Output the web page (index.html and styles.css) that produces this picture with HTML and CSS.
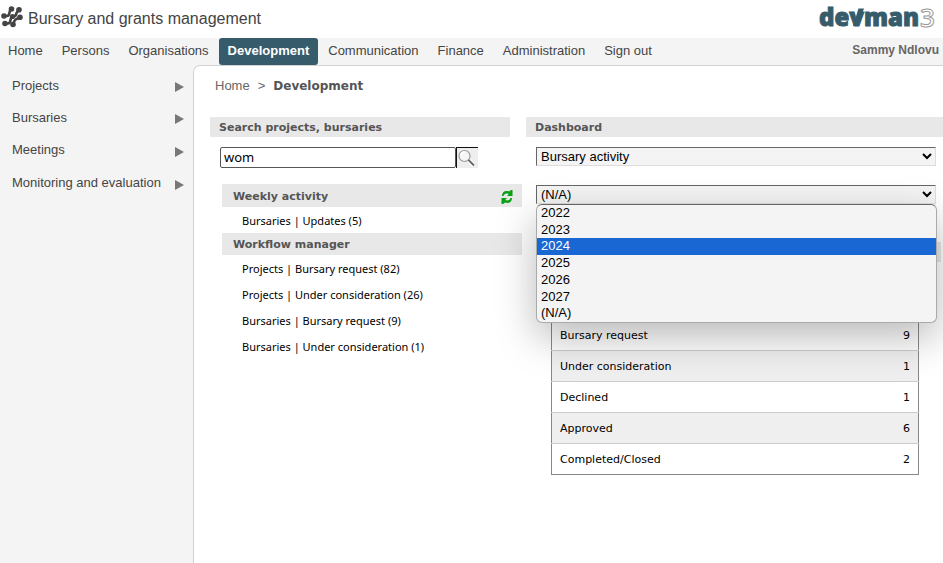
FILE: index.html
```html
<!DOCTYPE html>
<html lang="en">
<head>
<meta charset="utf-8">
<title>Bursary and grants management</title>
<link rel="stylesheet" href="styles.css">
</head>
<body>
<header class="top">
  <svg class="mark" viewBox="0 0 24 24" aria-hidden="true">
    <g fill="none" stroke="#444" stroke-width="2.6">
      <path d="M3.500 10H7q2 0 2.500-3.500L10.500 3"/>
      <path d="M5 17.500H8q2 0 2.500-3.500 .5-3.500 3-3.500 2.500 0 3-3.500L18.500 4"/>
      <path d="M13 19.500q1-5.500 3.500-6.500L20 11.500"/>
    </g>
    <g fill="#444"><circle cx="11.500" cy="3" r="2.800"/><circle cx="19" cy="3.700" r="2.800"/><circle cx="4" cy="10" r="2.800"/><circle cx="12.500" cy="10.500" r="2.600"/><circle cx="20" cy="11.200" r="2.800"/><circle cx="5" cy="17.500" r="2.800"/><circle cx="13" cy="18.500" r="2.800"/></g>
  </svg>
  <h1 class="title">Bursary and grants management</h1>
  <svg class="logo" viewBox="0 0 120 36" role="img" aria-label="devman3">
    <text class="logo-word" x="0" y="25">devman</text>
    <path class="logo-arm" d="M39.500 7.500H45L38.500 25H34z"/>
    <text class="logo-digit" x="101" y="26">3</text>
  </svg>
</header>
<nav class="nav">
  <a href="#">Home</a><a href="#">Persons</a><a href="#">Organisations</a><a href="#" class="active">Development</a><a href="#">Communication</a><a href="#">Finance</a><a href="#">Administration</a><a href="#">Sign out</a>
  <span class="user">Sammy Ndlovu</span>
</nav>
<div class="body">
  <aside class="side">
    <a href="#">Projects<span class="arrow"></span></a>
    <a href="#">Bursaries<span class="arrow"></span></a>
    <a href="#">Meetings<span class="arrow"></span></a>
    <a href="#">Monitoring and evaluation<span class="arrow"></span></a>
  </aside>
  <main class="main">
    <div class="crumbs"><a href="#">Home</a><span>&gt;</span><strong>Development</strong></div>
    <div class="columns">
      <section class="left">
        <h2 class="bar">Search projects, bursaries</h2>
        <form class="search">
          <input type="text" value="wom" aria-label="Search projects, bursaries">
          <button type="button" aria-label="Search"><svg viewBox="0 0 20 18"><path d="M12 11.500 17 17" stroke="#fff" stroke-width="4"/><circle cx="7.500" cy="7" r="5.500" fill="#f6f6f6" stroke="#999" stroke-width="1.200"/><path d="M3.500 6.500a4.200 4.200 0 0 1 4-3.500" stroke="#fff" stroke-width="1.500" fill="none"/><path d="M11.500 11 17 16.500" stroke="#666" stroke-width="1.800"/></svg></button>
        </form>
        <div class="tasks">
          <h3 class="bar">Weekly activity
            <button type="button" class="refresh" aria-label="Refresh"><svg viewBox="0 0 12 14" fill="#0a9f14"><path d="M1 6C1 2 4 0 8 1.500L10 0h1.500v6H6l1.800-2C5 3 3 4 2.500 6z"/><path d="M11 8c0 4-3 6-7 4.500L2 14H.500V8H6l-1.800 2C7 11 9 10 9.500 8z"/></svg></button></h3>
          <a href="#">Bursaries | Updates (5)</a>
          <h3 class="bar second">Workflow manager</h3>
          <a href="#">Projects | Bursary request (82)</a>
          <a href="#">Projects | Under consideration (26)</a>
          <a href="#">Bursaries | Bursary request (9)</a>
          <a href="#">Bursaries | Under consideration (1)</a>
        </div>
      </section>
      <section class="right">
        <h2 class="bar">Dashboard</h2>
        <div class="field"><select aria-label="Report"><option>Bursary activity</option></select></div>
        <div class="field picker">
          <select aria-label="Year"><option>(N/A)</option></select>
          <ul class="popup" role="listbox" aria-label="Year">
            <li role="option">2022</li><li role="option">2023</li><li role="option" aria-selected="true">2024</li><li role="option">2025</li><li role="option">2026</li><li role="option">2027</li><li role="option">(N/A)</li>
          </ul>
        </div>
        <div class="report-bar"></div>
        <table class="report">
          <tbody>
            <tr><th scope="row">Bursary request</th><td>9</td></tr>
            <tr><th scope="row">Under consideration</th><td>1</td></tr>
            <tr><th scope="row">Declined</th><td>1</td></tr>
            <tr><th scope="row">Approved</th><td>6</td></tr>
            <tr><th scope="row">Completed/Closed</th><td>2</td></tr>
          </tbody>
        </table>
      </section>
    </div>
  </main>
</div>
</body>
</html>
```
FILE: styles.css
```css
* { box-sizing: border-box; }
body {
  margin: 0;
  min-height: 100vh;
  display: flex;
  flex-direction: column;
  background: #fff;
  color: #000;
  font-family: "Liberation Sans", Arial, sans-serif;
  font-size: 13px;
}
a { color: inherit; text-decoration: none; }
h1, h2, h3 { margin: 0; }

.top { display: flex; align-items: center; height: 38px; padding-right: 4px; }
.mark { width: 24px; height: 24px; margin-bottom: 2px; }
.title { margin-left: 4px; font-size: 16px; font-weight: 400; color: #444; }
.logo { width: 120px; height: 36px; margin-left: auto; overflow: visible; }
.logo-word { font: 800 24px "Open Sans", sans-serif; fill: #365c6b; stroke: #365c6b; stroke-width: 1; }
.logo-arm { fill: #365c6b; }
.logo-digit { font: 600 26px "Open Sans", sans-serif; fill: #fff; stroke: #999; stroke-width: 1; }

.nav { display: flex; gap: 1px; height: 27px; background: #f4f4f4; color: #444; }
.nav a { padding: 0 9px; line-height: 25px; border-radius: 3px; }
.nav a:first-child { padding-left: 8px; }
.nav .active { background: #365c6b; color: #fff; font-weight: 700; }
.user { margin-left: auto; padding-right: 4px; font-size: 12px; font-weight: 700; line-height: 24px; color: #666; }

.body { flex: 1; display: flex; background: #f4f4f4; }
.side { width: 193px; padding-top: 4px; color: #444; }
.side a { display: flex; align-items: center; justify-content: space-between; height: 32px; padding: 0 9px 0 12px; }
.side a:nth-child(n+3) { height: 33px; }
.arrow { border-left: 9px solid #777; border-top: 5px solid transparent; border-bottom: 5px solid transparent; margin-top: 4px; }

.main { flex: 1; min-width: 0; overflow: hidden; background: #fff; border: solid #d2d2d2; border-width: 1px 0 0 1px; border-top-left-radius: 7px; }
.crumbs { display: flex; gap: 8px; padding-left: 21px; height: 51px; line-height: 40px; color: #666; }
.crumbs strong { font-family: "DejaVu Sans", Verdana, sans-serif; font-size: 12px; color: #555; }
.columns { display: grid; grid-template-columns: 300px 1fr; gap: 16px; padding-left: 16px; }
.left, .right { min-width: 0; }
.bar { height: 20px; padding: 1px 0 0 9px; line-height: 20px; background: #e8e8e8; color: #555; font-family: "DejaVu Sans", Verdana, sans-serif; font-size: 11px; font-weight: 700; }

.search { display: flex; margin: 10px 0 0 10px; }
.search input { width: 236px; height: 21px; padding: 0 3px 1px; border: 1px solid #555; border-radius: 2px; font: 13px "Noto Sans", sans-serif; }
.search button { width: 22px; height: 21px; padding: 0; border: solid #111; border-width: 1px 0 0 1px; background: #eee; }
.search svg { display: block; width: 20px; height: 18px; }

.tasks { width: 300px; margin: 16px 0 0 12px; font: 11px "Noto Sans", sans-serif; }
.tasks .bar { display: flex; justify-content: space-between; height: 23px; line-height: 23px; padding: 1px 9px 0 11px; }
.tasks .second { height: 22px; line-height: 22px; }
.tasks a { display: block; height: 26px; padding-left: 20px; line-height: 28px; }
.refresh { width: 12px; padding: 1px 0 0; border: 0; background: none; }
.refresh svg { display: block; width: 12px; height: 14px; }

.field { margin: 10px 7px 0 10px; height: 28px; }
.field select { display: block; width: 100%; height: 19px; padding: 0; border: 1px solid #ddd; border-top-color: #666; border-left-color: #666; border-radius: 0; background: #f4f4f4; color: #000; font: 13px "Liberation Sans", Arial, sans-serif; }
.picker { position: relative; }
.popup {
  position: absolute;
  top: 19px;
  left: 0;
  right: -1px;
  height: 119px;
  margin: 0;
  padding: 0;
  display: grid;
  grid-auto-rows: 1fr;
  list-style: none;
  background: #f4f4f4;
  border: 1px solid #aaa;
  border-top-color: #666;
  border-radius: 6px;
  box-shadow: 0 14px 40px rgba(0, 0, 0, .28);
}
.popup li { padding-left: 4px; line-height: 16px; }
.popup [aria-selected="true"] { background: #1967d2; color: #fff; }
.report-bar { height: 20px; margin: 29px 2px 0 12px; background: #e8e8e8; }
.report { width: calc(100% - 49px); margin: 57px 0 0 25px; border: 1px solid #888; border-collapse: collapse; font: 11px "DejaVu Sans", Verdana, sans-serif; }
.report th, .report td { height: 31px; padding: 0 8px; border-bottom: 1px solid #ccc; text-align: left; font-weight: 400; }
.report td { text-align: right; }
.report tr:nth-child(even) { background: #efefef; }
.report tr:last-child > * { border-bottom-color: #888; }
```
